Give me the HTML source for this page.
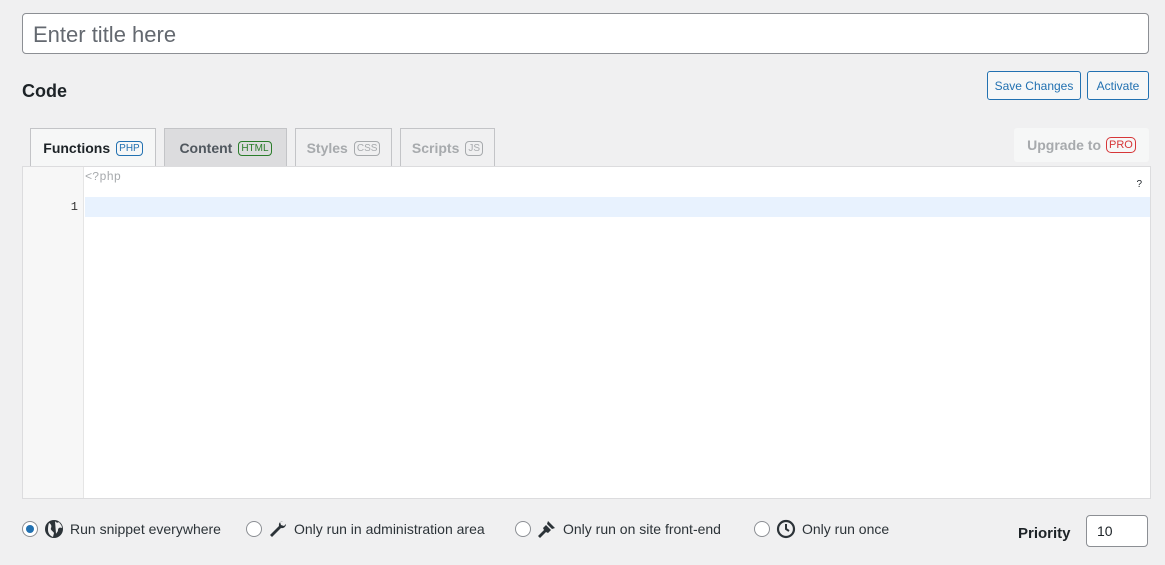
<!DOCTYPE html>
<html><head><style>
*{box-sizing:border-box;margin:0;padding:0}
body{width:1165px;height:565px;background:#f0f0f1;font-family:"Liberation Sans",sans-serif;position:relative;overflow:hidden;color:#1d2327}
.abs{position:absolute}
.title{left:22px;top:13px;width:1127px;height:41px;background:#fff;border:1px solid #8c8f94;border-radius:4px;font-size:22px;color:#646970;padding:8px 10px}
.h{left:22px;top:81px;font-size:18px;font-weight:bold}
.btn{top:71px;height:29px;border:1px solid #2271b1;color:#2271b1;border-radius:3px;font-size:12px;background:#f6f7f7;display:flex;align-items:center;justify-content:center}
.tab{top:128px;height:39px;border:1px solid #c3c4c7;border-bottom:none;font-size:14px;font-weight:bold;display:flex;align-items:center;justify-content:center;gap:6px}
.badge{font-size:10px;font-weight:normal;border:1px solid;border-radius:4px;padding:1px 2px}
.editor{left:22px;top:166px;width:1129px;height:333px;background:#fff;border:1px solid #dcdcde}
.gutter{position:absolute;left:0;top:0;width:61px;height:100%;background:#f7f7f7;border-right:1px solid #e5e5e5}
.opt{top:519px;font-size:14px;display:flex;align-items:center;gap:6px;color:#2c3338}
.radio{width:16px;height:16px;border:1px solid #8c8f94;border-radius:50%;background:#fff;display:inline-block;position:relative}
</style></head><body>
<div class="abs title">Enter title here</div>
<div class="abs h">Code</div>
<div class="abs btn" style="left:987px;width:94px">Save Changes</div>
<div class="abs btn" style="left:1087px;width:62px">Activate</div>
<div class="abs tab" style="left:30px;width:126px;background:#f6f7f7;color:#1d2327;height:39px">Functions <span class="badge" style="color:#2271b1">PHP</span></div>
<div class="abs tab" style="left:164px;width:123px;background:#dcdcde;color:#50575e">Content <span class="badge" style="color:#2a7d2a">HTML</span></div>
<div class="abs tab" style="left:295px;width:97px;color:#a7aaad">Styles <span class="badge">CSS</span></div>
<div class="abs tab" style="left:400px;width:95px;color:#a7aaad">Scripts <span class="badge">JS</span></div>
<div class="abs" style="left:1014px;top:128px;width:135px;height:34px;background:#f6f7f7;border-radius:3px;color:#a7aaad;font-size:14px;font-weight:bold;display:flex;align-items:center;justify-content:center;gap:5px">Upgrade to <span class="badge" style="color:#d63638;border-radius:5px;font-size:11px">PRO</span></div>
<div class="abs editor">
<div class="gutter"><div style="position:absolute;right:5px;top:33px;font-family:'Liberation Mono',monospace;font-size:12px;color:#333">1</div></div>
<div style="position:absolute;left:62px;top:3px;font-family:'Liberation Mono',monospace;font-size:12px;color:#a7aaad">&lt;?php</div>
<div style="position:absolute;right:8px;top:12px;font-size:10px">?</div>
<div style="position:absolute;left:62px;right:0;top:30px;height:20px;background:#e8f2fe"></div>
</div>
<div class="abs opt" style="left:22px"><span class="radio"><span style="position:absolute;left:3px;top:3px;width:8px;height:8px;border-radius:50%;background:#2271b1"></span></span>
<svg width="20" height="20" viewBox="0 0 20 20"><circle cx="10" cy="10" r="9" fill="#2c3338"/><path d="M5 4c2 1 3 3 2 5s2 3 3 5l-1 4c-3-1-5-4-5-7 0-2 0-4 1-7zM11 2c1 2 3 2 4 1 1 2 3 3 3 6-2-1-4 0-4 2s-2 3-2 4" fill="#f0f0f1"/></svg>Run snippet everywhere</div>
<div class="abs opt" style="left:246px"><span class="radio"></span>
<svg width="20" height="20" viewBox="0 0 20 20"><path d="M15 2a4 4 0 0 0-4 5L2 16l2 2 9-9a4 4 0 0 0 5-4l-2 2-3-1-1-3z" fill="#2c3338"/></svg>Only run in administration area</div>
<div class="abs opt" style="left:515px"><span class="radio"></span>
<svg width="20" height="20" viewBox="0 0 20 20"><path d="M11 2l7 7-3 1-5-5zM9 6l5 5-3 3-2-1-6 6-2-2 6-6-1-2z" fill="#2c3338"/></svg>Only run on site front-end</div>
<div class="abs opt" style="left:754px"><span class="radio"></span>
<svg width="20" height="20" viewBox="0 0 20 20"><circle cx="10" cy="10" r="8" fill="none" stroke="#2c3338" stroke-width="2.2"/><path d="M10 5v5l3 2" fill="none" stroke="#2c3338" stroke-width="2"/></svg>Only run once</div>
<div class="abs" style="left:1018px;top:525px;font-size:15px;font-weight:bold">Priority</div>
<div class="abs" style="left:1086px;top:515px;width:62px;height:32px;background:#fff;border:1px solid #8c8f94;border-radius:4px;font-size:14px;padding:7px 10px">10</div>
</body></html>
